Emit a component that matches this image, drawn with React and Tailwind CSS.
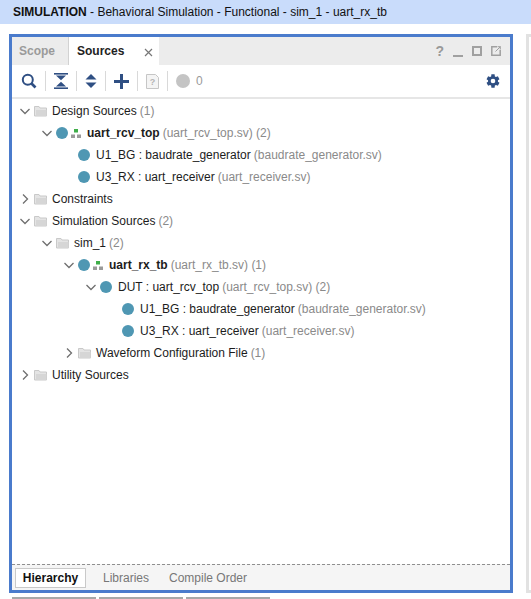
import React from "react";

const FONT = "font-['Liberation_Sans',Arial,sans-serif]";

function Chevron({ open }) {
  return (
    <svg width="16" height="16" viewBox="0 0 16 16" fill="none" stroke="#6f6f6f" strokeWidth="1.3">
      {open ? <path d="M3.5 6 L8 10.5 L12.5 6" /> : <path d="M6 3.5 L10.5 8 L6 12.5" />}
    </svg>
  );
}

function Folder() {
  return (
    <svg width="13" height="12" viewBox="0 0 13 12" className="mr-[5px] shrink-0">
      <path d="M0.5 1.5 H5 L6 3 H12.5 V11 H0.5 Z" fill="#e4e4e4" stroke="#c9c9c9" />
      <path d="M2 5 H12.5 V11 H2 Z" fill="#d6d6d6" />
    </svg>
  );
}

function TopIcon() {
  return (
    <svg width="10" height="9" viewBox="0 0 10 9" className="ml-[3px] mr-[6px] shrink-0">
      <rect x="3" y="0" width="4" height="3.5" fill="#3fae49" />
      <rect x="0" y="5.5" width="4" height="3.5" fill="#9a9a9a" />
      <rect x="6" y="5.5" width="4" height="3.5" fill="#9a9a9a" />
    </svg>
  );
}

const rows = [
  { depth: 0, open: true, folder: true, label: "Design Sources", note: "(1)" },
  { depth: 1, open: true, top: true, label: "uart_rcv_top", note: "(uart_rcv_top.sv) (2)" },
  { depth: 2, label: "U1_BG : baudrate_generator", note: "(baudrate_generator.sv)" },
  { depth: 2, label: "U3_RX : uart_receiver", note: "(uart_receiver.sv)" },
  { depth: 0, open: false, folder: true, label: "Constraints" },
  { depth: 0, open: true, folder: true, label: "Simulation Sources", note: "(2)" },
  { depth: 1, open: true, folder: true, label: "sim_1", note: "(2)" },
  { depth: 2, open: true, top: true, label: "uart_rx_tb", note: "(uart_rx_tb.sv) (1)" },
  { depth: 3, open: true, label: "DUT : uart_rcv_top", note: "(uart_rcv_top.sv) (2)" },
  { depth: 4, label: "U1_BG : baudrate_generator", note: "(baudrate_generator.sv)" },
  { depth: 4, label: "U3_RX : uart_receiver", note: "(uart_receiver.sv)" },
  { depth: 2, open: false, folder: true, label: "Waveform Configuration File", note: "(1)" },
  { depth: 0, open: false, folder: true, label: "Utility Sources" },
];

function Row({ row }) {
  return (
    <div className="flex h-[22px] items-center whitespace-nowrap" style={{ paddingLeft: 5 + row.depth * 22 }}>
      <div className="mr-px flex w-[16px] shrink-0 justify-center">
        {row.open !== undefined && <Chevron open={row.open} />}
      </div>
      {row.folder ? (
        <Folder />
      ) : (
        <div className={`h-[12px] w-[12px] shrink-0 rounded-full bg-[#4f97b3] ${row.top ? "" : "mr-[6px]"}`} />
      )}
      {row.top && <TopIcon />}
      <span className={`text-[#1c1c1c] ${row.top ? "font-bold" : ""}`}>{row.label}</span>
      {row.note && <span className="ml-[3px] text-[#8a8a8a]">{row.note}</span>}
    </div>
  );
}

function Sep() {
  return <div className="mx-[8px] h-[20px] w-px bg-[#d9d9d9]" />;
}

function Toolbar() {
  return (
    <div className="flex h-[32px] items-center pl-[9px] pr-[9px]">
      <svg width="16" height="16" viewBox="0 0 16 16" fill="none" stroke="#2f4f83" strokeWidth="2">
        <circle cx="6.8" cy="6.8" r="5" />
        <path d="M10.5 10.5 L14.5 14.5" strokeWidth="2.6" />
      </svg>
      <Sep />
      <svg width="14" height="16" viewBox="0 0 14 16" fill="#2f4f83">
        <rect x="0" y="0" width="14" height="1.6" />
        <rect x="0" y="14.4" width="14" height="1.6" />
        <path d="M2 2.6 H12 L7 7.2 Z" />
        <path d="M2 13.4 H12 L7 8.8 Z" />
      </svg>
      <Sep />
      <svg width="12" height="16" viewBox="0 0 12 16" fill="#2f4f83">
        <path d="M6 1 L11.5 6.6 H0.5 Z" />
        <path d="M6 15 L11.5 9.4 H0.5 Z" />
      </svg>
      <Sep />
      <svg width="15" height="15" viewBox="0 0 15 15" fill="#2f4f83">
        <rect x="6" y="0" width="3" height="15" />
        <rect x="0" y="6" width="15" height="3" />
      </svg>
      <Sep />
      <svg width="13" height="15" viewBox="0 0 13 15" fill="none">
        <path d="M0.5 0.5 H9.5 L12.5 3.5 V14.5 H0.5 Z" fill="#f4f4f4" stroke="#c6c6c6" />
        <text x="6.5" y="11" textAnchor="middle" fontSize="9" fontWeight="bold" fill="#b4b4b4" fontFamily="Liberation Sans">?</text>
      </svg>
      <Sep />
      <div className="h-[14px] w-[14px] rounded-full bg-[#c4c4c4]" />
      <span className="ml-[6px] text-[#9a9a9a]">0</span>
      <svg width="16" height="16" viewBox="0 0 24 24" fill="#2f4f83" className="ml-auto">
        <path d="M19.4 13a7.6 7.6 0 0 0 0-2l2.3-1.8-2.4-4.2-2.8 1.1a7.6 7.6 0 0 0-1.7-1L14.4 2H9.6l-.4 3.1a7.6 7.6 0 0 0-1.7 1L4.7 5 2.3 9.2 4.6 11a7.6 7.6 0 0 0 0 2l-2.3 1.8 2.4 4.2 2.8-1.1a7.6 7.6 0 0 0 1.7 1l.4 3.1h4.8l.4-3.1a7.6 7.6 0 0 0 1.7-1l2.8 1.1 2.4-4.2zM12 15.5a3.5 3.5 0 1 1 0-7 3.5 3.5 0 0 1 0 7z" />
      </svg>
    </div>
  );
}

export default function App() {
  return (
    <div className={`flex h-[599px] w-[531px] flex-col overflow-hidden bg-white text-[12px] ${FONT}`}>
      {/* title bar */}
      <div className="flex h-[24px] shrink-0 items-center bg-[#c9dcfb] pl-[13px] text-[#111]">
        <span className="font-bold">SIMULATION</span>
        <span>&nbsp;- Behavioral Simulation - Functional - sim_1 - uart_rx_tb</span>
      </div>

      <div className="mt-[10px] flex h-[559px] shrink-0">
        {/* sources panel */}
        <div className="ml-[9px] flex w-[504px] flex-col border-[3px] border-[#4a7bcc]">
          <div className="flex h-[28px] shrink-0 bg-[#ececec]">
            <div className="flex w-[57px] items-center border-r border-[#d2d2d2] pl-[7px] font-bold text-[#9a9a9a]">Scope</div>
            <div className="flex w-[90px] items-center bg-white pl-[8px] font-bold text-[#222]">
              Sources
              <svg width="9" height="9" viewBox="0 0 9 9" stroke="#777" strokeWidth="1.2" className="ml-[20px] mt-[2px]">
                <path d="M1 1 L8 8 M8 1 L1 8" />
              </svg>
            </div>
            <div className="ml-auto flex items-center gap-[9px] pr-[9px]">
              <span className="text-[14px] font-bold text-[#999]">?</span>
              <div className="mt-[9px] h-[2px] w-[10px] bg-[#a0a0a0]" />
              <div className="h-[10px] w-[10px] border-2 border-[#a0a0a0]" />
              <svg width="10" height="10" viewBox="0 0 10 10" fill="none" stroke="#a0a0a0" strokeWidth="1.5">
                <path d="M6 0.8 H0.8 V9.2 H9.2 V4" />
                <path d="M4.5 5.5 L9.5 0.5 M6.5 0.7 H9.3 V3.5" strokeWidth="1" />
              </svg>
            </div>
          </div>

          <Toolbar />
          <div className="h-[2px] shrink-0 bg-[#e6e6e6]" />

          <div className="min-h-0 flex-1 pt-[1px]">
            {rows.map((r, i) => <Row key={i} row={r} />)}
          </div>

          <div className="flex h-[26px] shrink-0 items-center gap-[5px] border-t border-dashed border-[#8f8f8f] bg-[#f5f5f5] pl-[3px]">
            <div className="flex h-[20px] w-[71px] items-center justify-center border border-[#c9c9c9] bg-white font-bold text-[#111]">Hierarchy</div>
            <div className="flex w-[70px] justify-center text-[#777]">Libraries</div>
            <div className="ml-[3px] text-[#777]">Compile Order</div>
          </div>
        </div>

        {/* neighbouring panel, cut by the window edge */}
        <div className="ml-[13px] flex-1 border-[3px] border-r-0 border-[#e2e2e2]" />
      </div>

      {/* cut-off tabs at the bottom */}
      <div className="ml-[12px] mt-[4px] flex gap-[3px]">
        <div className="h-[2px] w-[84px] bg-[#a8a8a8]" />
        <div className="h-[2px] w-[84px] bg-[#a8a8a8]" />
        <div className="h-[2px] w-[84px] bg-[#a8a8a8]" />
      </div>
    </div>
  );
}
